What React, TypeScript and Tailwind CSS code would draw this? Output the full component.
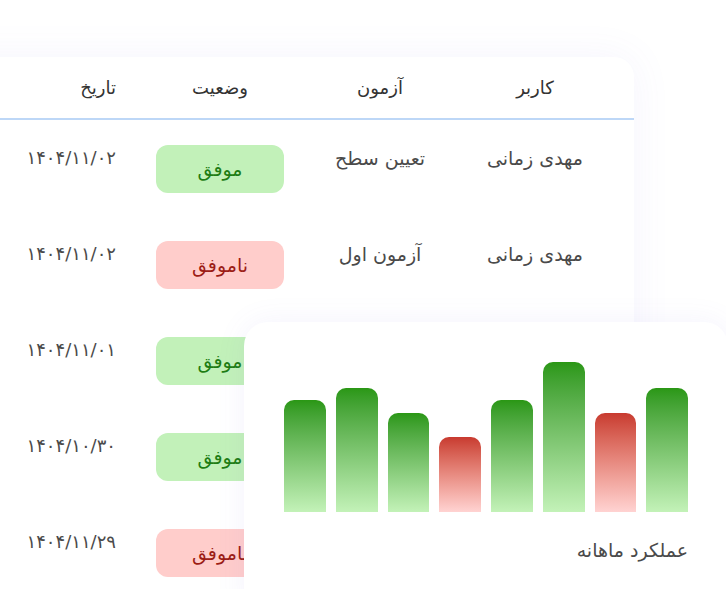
const rows = [
  { user: "مهدی زمانی", exam: "تعیین سطح", ok: true, date: "۱۴۰۴/۱۱/۰۲" },
  { user: "مهدی زمانی", exam: "آزمون اول", ok: false, date: "۱۴۰۴/۱۱/۰۲" },
  { user: "مهدی زمانی", exam: "آزمون اول", ok: true, date: "۱۴۰۴/۱۱/۰۱" },
  { user: "مهدی زمانی", exam: "آزمون اول", ok: true, date: "۱۴۰۴/۱۰/۳۰" },
  { user: "مهدی زمانی", exam: "آزمون اول", ok: false, date: "۱۴۰۴/۱۱/۲۹" },
]

const bars = [
  { h: 112, ok: true },
  { h: 124, ok: true },
  { h: 99, ok: true },
  { h: 75, ok: false },
  { h: 112, ok: true },
  { h: 150, ok: true },
  { h: 99, ok: false },
  { h: 124, ok: true },
]

const App = () => {
  return (
    <div
      className="relative h-[589px] w-[726px] overflow-hidden bg-white"
      style={{ fontFamily: '"DejaVu Sans", sans-serif' }}
    >
      <div className="pt-[57px]">
        <div
          dir="rtl"
          className="ml-[-66px] w-[700px] rounded-[20px] bg-white shadow-[0_0_40px_rgba(110,100,230,0.07)]"
        >
          <div className="grid h-[63px] grid-cols-[198px_112px_168px_1fr] items-center border-b-2 border-[#bdd7f7] text-[18px] text-[#333]">
            <span className="text-center">کاربر</span>
            <span className="text-center">آزمون</span>
            <span className="w-[128px] justify-self-end text-center">وضعیت</span>
            <span className="pr-[40px] text-right">تاریخ</span>
          </div>
          {rows.map((r, i) => (
            <div
              key={i}
              className="grid h-[96px] grid-cols-[198px_112px_168px_1fr] items-start pt-[25px] text-[19px] text-[#4a4a4a]"
            >
              <span className="flex justify-center whitespace-nowrap pt-px leading-6">{r.user}</span>
              <span className="flex justify-center whitespace-nowrap pt-px leading-6">{r.exam}</span>
              <span
                className={
                  r.ok
                    ? "flex h-[48px] w-[128px] items-center justify-center justify-self-end rounded-[12px] bg-[#c2f1b9] text-[#1e7d14]"
                    : "flex h-[48px] w-[128px] items-center justify-center justify-self-end rounded-[12px] bg-[#ffcdcb] text-[#9c1d16]"
                }
              >
                {r.ok ? "موفق" : "ناموفق"}
              </span>
              <span className="whitespace-nowrap pr-[40px] pt-px text-right text-[18px] leading-6">{r.date}</span>
            </div>
          ))}
        </div>
      </div>

      <div className="absolute left-[244px] top-[322px] flex h-[300px] w-[484px] flex-col rounded-[24px] bg-white pl-[40px] pr-[40px] pt-[40px] shadow-[0_0_30px_rgba(110,100,230,0.08)]">
        <div className="flex h-[150px] items-end gap-[10px]">
          {bars.map((b, i) => (
            <div
              key={i}
              className={
                b.ok
                  ? "flex-1 rounded-t-[10px] bg-gradient-to-b from-[#2a9714] to-[#c3f2b8]"
                  : "flex-1 rounded-t-[10px] bg-gradient-to-b from-[#c83a2f] to-[#ffd3d2]"
              }
              style={{ height: b.h }}
            />
          ))}
        </div>
        <div dir="rtl" className="mt-[26px] text-right text-[19px] leading-6 text-[#4a4a4a]">
          عملکرد ماهانه
        </div>
      </div>
    </div>
  )
}

export default App
